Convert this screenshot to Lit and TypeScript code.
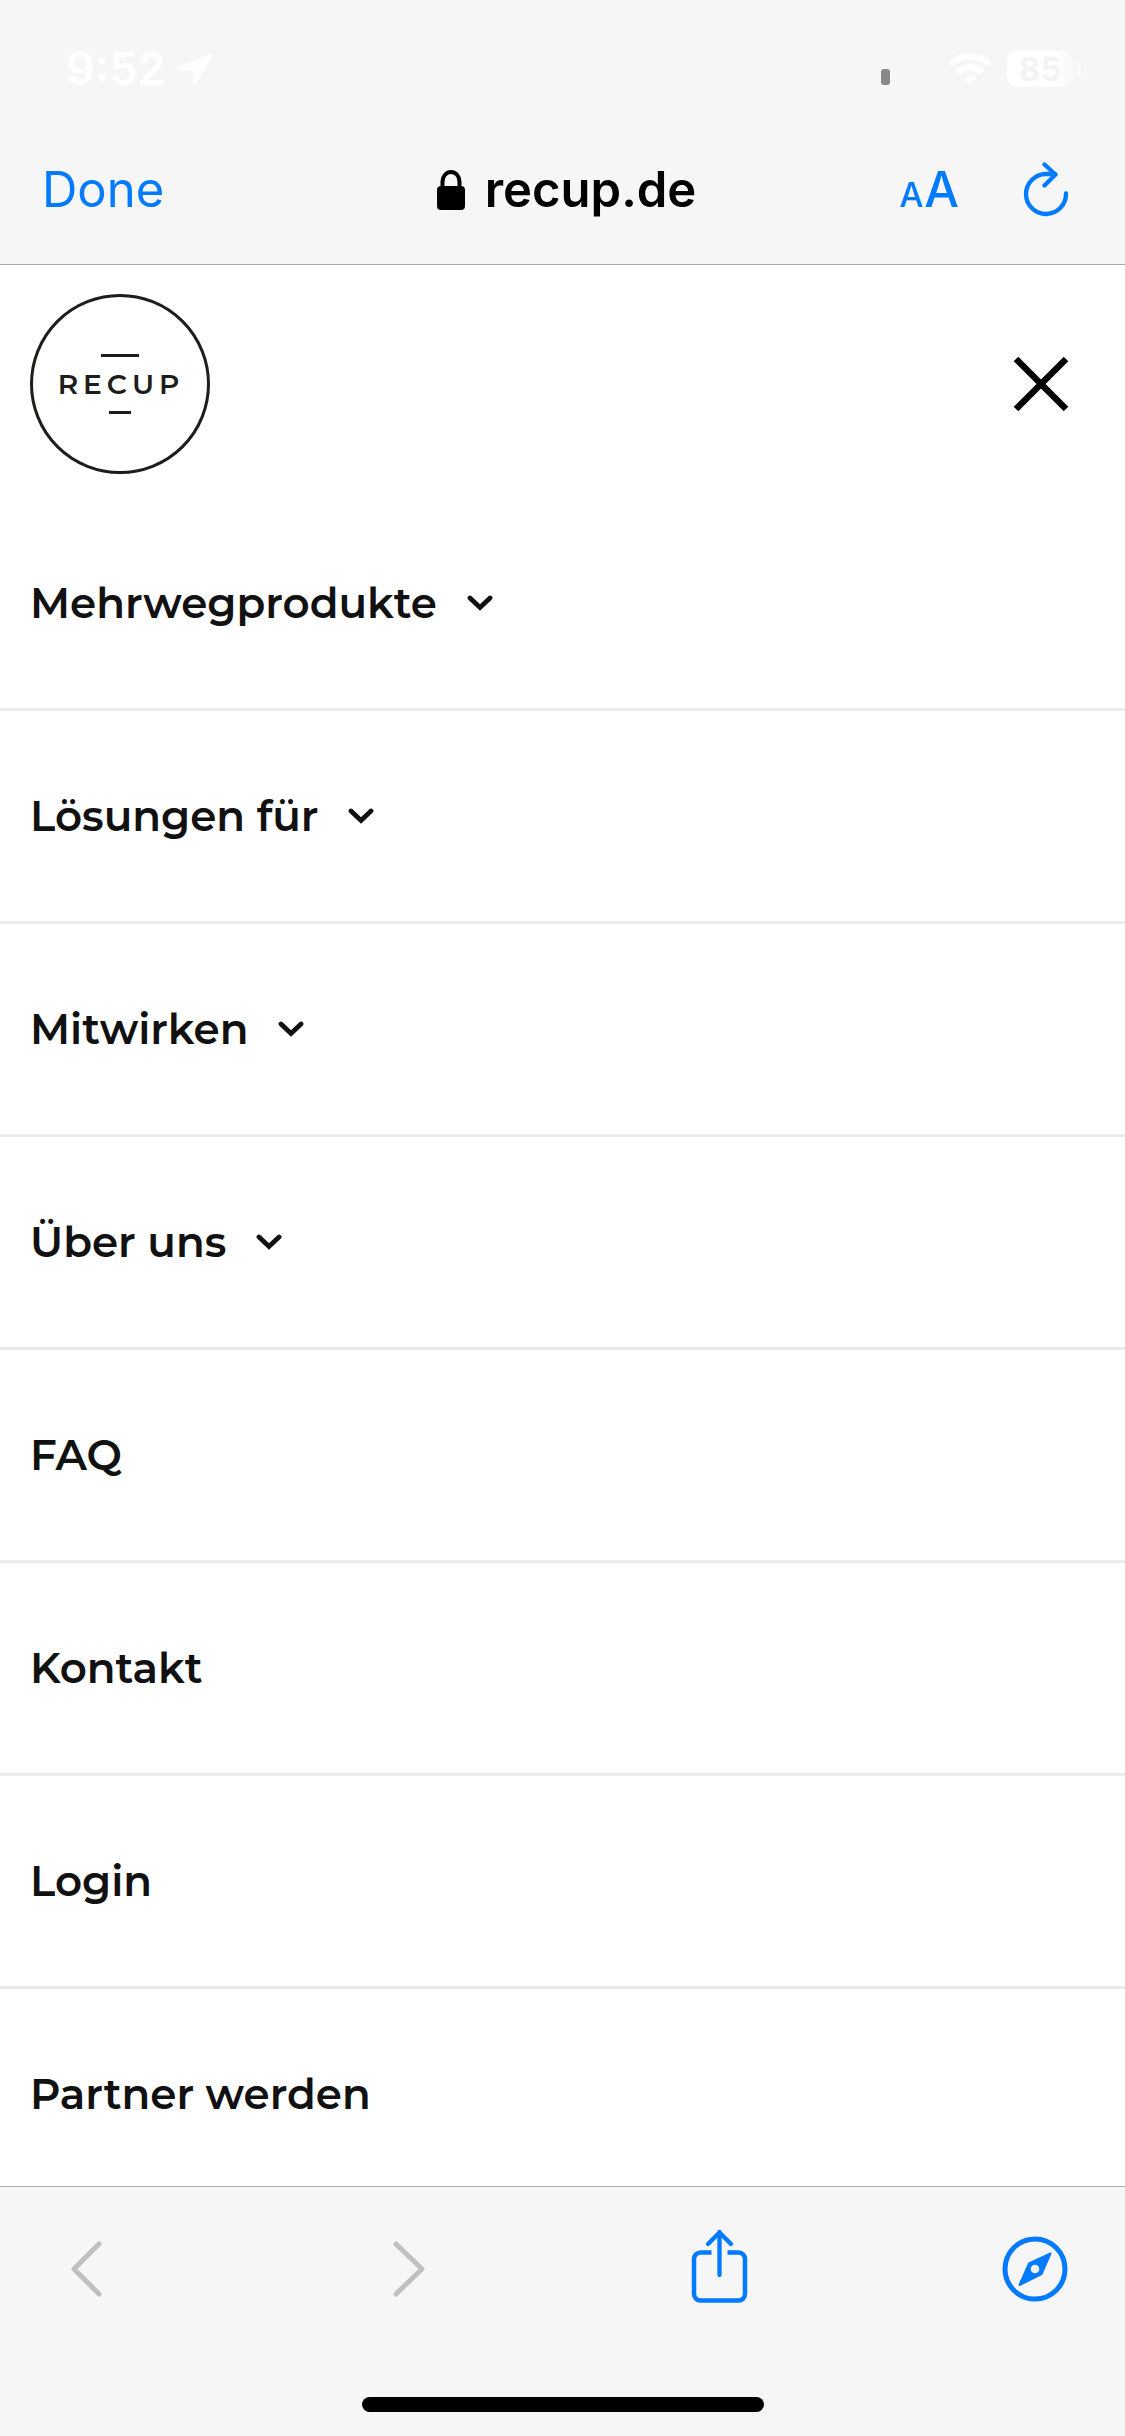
import { LitElement, html, css, svg } from "lit";
import { customElement, property, state } from "lit/decorators.js";

interface MenuItem {
  label: string;
  expandable: boolean;
}

const MENU: MenuItem[] = [
  { label: "Mehrwegprodukte", expandable: true },
  { label: "Lösungen für", expandable: true },
  { label: "Mitwirken", expandable: true },
  { label: "Über uns", expandable: true },
  { label: "FAQ", expandable: false },
  { label: "Kontakt", expandable: false },
  { label: "Login", expandable: false },
  { label: "Partner werden", expandable: false },
];

@customElement("status-bar")
class StatusBar extends LitElement {
  static styles = css`
    :host {
      display: flex;
      align-items: center;
      justify-content: space-between;
      padding: 22px 44px 0 66px;
      height: 94px;
      color: #fff;
      font-family: Inter, "Liberation Sans", sans-serif;
      font-weight: 600;
    }
    .group {
      display: flex;
      align-items: center;
    }
    .time {
      font-size: 45px;
      line-height: 52px;
      margin-right: 12px;
    }
    .signal {
      width: 9px;
      height: 16px;
      border-radius: 3px;
      background: #888;
      margin: 16px 58px 0 0;
    }
    .wifi {
      margin-right: 15px;
    }
    .battery {
      display: flex;
      align-items: center;
      gap: 4px;
    }
    .cell {
      width: 66px;
      height: 36px;
      border-radius: 11px;
      background: linear-gradient(90deg, #fff 85%, #fafafa 85%);
      color: #f3f3f3;
      font-size: 33px;
      font-weight: 700;
      line-height: 36px;
      text-align: center;
    }
    .tip {
      width: 4px;
      height: 12px;
      border-radius: 0 4px 4px 0;
      background: #fafafa;
    }
    svg {
      display: block;
    }
  `;

  render() {
    return html`
      <div class="group">
        <span class="time">9:52</span>
        <svg width="36" height="34" viewBox="0 0 36 34" aria-hidden="true">
          <path
            d="M33 1.5 1.8 15.2c-1.8.9-1.3 2.8.5 2.9l13.6.3.4 13.2c.1 2 2.2 2.300 3.100.5L35 4c.8-1.800-.3-3.200-2-2.500Z"
            fill="#fff"
          />
        </svg>
      </div>
      <div class="group">
        <span class="signal"></span>
        <svg class="wifi" width="44" height="34" viewBox="0 0 44 34" aria-hidden="true">
          <g fill="none" stroke="#fff" stroke-width="6.500">
            <path d="M2.500 12.500a28 28 0 0 1 39 0" />
            <path d="M10 20.500a17 17 0 0 1 24 0" />
          </g>
          <path d="M22 33l-6-6.500a9 9 0 0 1 12 0Z" fill="#fff" />
        </svg>
        <div class="battery">
          <div class="cell">85</div>
          <div class="tip"></div>
        </div>
      </div>
    `;
  }
}

@customElement("address-bar")
class AddressBar extends LitElement {
  static styles = css`
    :host {
      display: grid;
      grid-template-columns: 1fr auto 1fr;
      align-items: center;
      height: 148px;
      padding: 0 56px 0 42px;
      border-bottom: 1px solid #aaa;
      font-family: Inter, "Liberation Sans", sans-serif;
      font-size: 49px;
      line-height: 60px;
    }
    button {
      appearance: none;
      border: 0;
      padding: 0;
      background: none;
      font: inherit;
      color: #007aff;
      cursor: pointer;
    }
    .done {
      justify-self: start;
    }
    .title {
      display: flex;
      align-items: center;
      gap: 20px;
      padding-left: 22px;
      color: #000;
      font-weight: 600;
    }
    .tools {
      justify-self: end;
      display: flex;
      align-items: center;
      gap: 64px;
    }
    .text-size {
      display: flex;
      align-items: baseline;
      gap: 1px;
      font-weight: 500;
    }
    .small {
      font-size: 34px;
      line-height: 40px;
    }
    svg {
      display: block;
    }
  `;

  render() {
    return html`
      <button class="done">Done</button>
      <div class="title">
        <svg width="28" height="40" viewBox="0 0 28 40" aria-hidden="true">
          <path d="M5.500 18v-6.500a8.500 9.500 0 0 1 17 0V18" fill="none" stroke="#000" stroke-width="4" />
          <rect x="0" y="16" width="28" height="24" rx="4" />
        </svg>
        <span>recup.de</span>
      </div>
      <div class="tools">
        <button class="text-size" aria-label="Text size">
          <span class="small">A</span><span>A</span>
        </button>
        <button aria-label="Reload">
          <svg width="46" height="56" viewBox="0 0 46 56">
            <g
              fill="none"
              stroke="#007aff"
              stroke-width="4.300"
              stroke-linecap="round"
              stroke-linejoin="round"
            >
              <path d="M43 31.500a20 20 0 1 1-20-19.500h9" />
              <path d="M21.500 2.500l11 10-11 11" />
            </g>
          </svg>
        </button>
      </div>
    `;
  }
}

@customElement("site-header")
class SiteHeader extends LitElement {
  static styles = css`
    :host {
      display: flex;
      align-items: center;
      justify-content: space-between;
      flex-shrink: 0;
      padding: 29px 55px 24px 30px;
    }
    .logo {
      box-sizing: border-box;
      width: 180px;
      height: 180px;
      border: 3px solid #1d1d1b;
      border-radius: 50%;
      display: flex;
      flex-direction: column;
      align-items: center;
      justify-content: center;
      gap: 12px;
      color: #1d1d1b;
      text-decoration: none;
    }
    .bar {
      width: 38px;
      height: 3px;
      background: #1d1d1b;
    }
    .short {
      width: 22px;
    }
    .name {
      font-family: Montserrat, Inter, "Liberation Sans", sans-serif;
      font-size: 28px;
      font-weight: 600;
      line-height: 30px;
      letter-spacing: 5px;
      padding-left: 2px;
    }
    button {
      appearance: none;
      border: 0;
      padding: 0;
      background: none;
      cursor: pointer;
    }
    svg {
      display: block;
    }
  `;

  render() {
    return html`
      <a class="logo" href="#">
        <span class="bar"></span>
        <span class="name">RECUP</span>
        <span class="bar short"></span>
      </a>
      <button aria-label="Menü schließen">
        <svg width="58" height="58" viewBox="0 0 58 58">
          <path d="M4 4 54 54M54 4 4 54" stroke="#000" stroke-width="6.500" />
        </svg>
      </button>
    `;
  }
}

@customElement("menu-row")
class MenuRow extends LitElement {
  static styles = css`
    :host {
      display: block;
      flex-shrink: 0;
      border-bottom: 3px solid #ebebeb;
    }
    .entry {
      appearance: none;
      box-sizing: border-box;
      width: 100%;
      border: 0;
      background: none;
      display: flex;
      align-items: center;
      gap: 30px;
      padding: 75px 30px;
      color: #111;
      font-family: Montserrat, Inter, "Liberation Sans", sans-serif;
      font-size: 42px;
      font-weight: 600;
      line-height: 60px;
      text-align: left;
      text-decoration: none;
      cursor: pointer;
    }
  `;

  @property({ attribute: false }) item!: MenuItem;
  @state() private open = false;

  render() {
    const { label, expandable } = this.item;
    if (!expandable) {
      return html`<a class="entry" href="#">${label}</a>`;
    }
    return html`
      <button
        class="entry"
        aria-expanded=${this.open ? "true" : "false"}
        @click=${() => (this.open = !this.open)}
      >
        <span>${label}</span>
        <svg width="26" height="16" viewBox="0 0 26 16" aria-hidden="true">
          <path
            d="M3 3 13 12.500 23 3"
            fill="none"
            stroke="#111"
            stroke-width="4.800"
            stroke-linecap="round"
          />
        </svg>
      </button>
    `;
  }
}

@customElement("browser-toolbar")
class BrowserToolbar extends LitElement {
  static styles = css`
    :host {
      display: flex;
      flex-direction: column;
      align-items: center;
      gap: 86px;
      padding: 40px 0 24px;
      border-top: 1px solid #adadad;
      background: #f6f6f6;
    }
    .actions {
      box-sizing: border-box;
      width: 100%;
      display: grid;
      grid-template-columns: 323fr 298fr 311fr auto;
      align-items: center;
      justify-items: start;
      padding: 0 57px 0 70px;
    }
    button {
      appearance: none;
      border: 0;
      padding: 0;
      background: none;
      cursor: pointer;
    }
    svg {
      display: block;
      fill: none;
      stroke: #007aff;
      stroke-linecap: round;
      stroke-linejoin: round;
    }
    .dim {
      stroke: #c0c0c0;
      stroke-width: 5px;
    }
    .blue {
      stroke-width: 4px;
    }
    .home {
      width: 402px;
      height: 15px;
      border-radius: 8px;
      background: #000;
    }
  `;

  private icon(w: number, h: number, cls: string, body: unknown) {
    return html`<svg class=${cls} width=${w} height=${h} viewBox="0 0 ${w} ${h}">${body}</svg>`;
  }

  render() {
    return html`
      <div class="actions">
        <button disabled aria-label="Back">
          ${this.icon(32, 56, "dim", svg`<path d="M29 3 4 28l25 25" />`)}
        </button>
        <button disabled aria-label="Forward">
          ${this.icon(32, 56, "dim", svg`<path d="M3 3l26 25L3 53" />`)}
        </button>
        <button aria-label="Share">
          ${this.icon(
            58,
            84,
            "blue",
            svg`
              <path d="M20.500 25.500H9.500a6.500 6.500 0 0 0-6.500 6.500v35a6.500 6.500 0 0 0 6.500 6.500h38a6.500 6.500 0 0 0 6.500-6.500V32a6.500 6.500 0 0 0-6.500-6.500H36.500" stroke-linecap="butt" stroke-width="4.500" />
              <path d="M28.500 5v43M17 17 28.500 5.500 40 17" stroke-width="4.300" />
            `,
          )}
        </button>
        <button aria-label="Open in browser">
          ${this.icon(
            66,
            66,
            "blue",
            svg`
              <circle cx="33" cy="33" r="30" stroke-width="5" />
              <path d="M48.500 17.500 39.500 38 17.500 49 27 27.500Z" fill="#007aff" stroke-width="2" />
              <circle cx="33" cy="33" r="4.300" fill="#f6f6f6" stroke="none" />
            `,
          )}
        </button>
      </div>
      <div class="home"></div>
    `;
  }
}

@customElement("app-root")
class AppRoot extends LitElement {
  static styles = css`
    :host {
      display: flex;
      flex-direction: column;
      height: 100vh;
      background: #fff;
    }
    .chrome {
      background: #f6f6f6;
    }
    .page {
      flex: 1;
      min-height: 0;
      display: flex;
      flex-direction: column;
      overflow-y: auto;
      scrollbar-width: none;
    }
    .menu {
      display: flex;
      flex-direction: column;
    }
  `;

  render() {
    return html`
      <header class="chrome">
        <status-bar></status-bar>
        <address-bar></address-bar>
      </header>
      <main class="page">
        <site-header></site-header>
        <nav class="menu">
          ${MENU.map((item) => html`<menu-row .item=${item}></menu-row>`)}
        </nav>
      </main>
      <browser-toolbar></browser-toolbar>
    `;
  }
}
